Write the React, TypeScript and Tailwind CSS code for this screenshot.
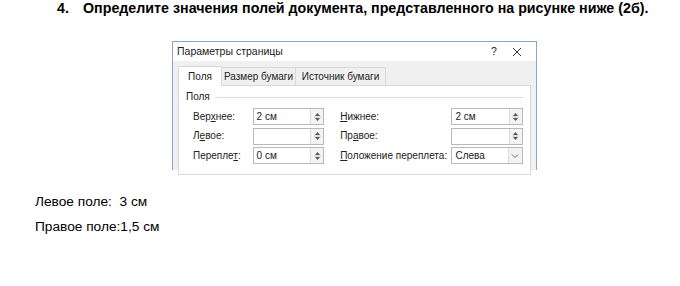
import React from 'react';

const Spinner: React.FC<{ value?: string }> = ({ value }) => (
  <div className="flex h-[17px] w-[72px] border border-[#b9b9b9] bg-white">
    <div className="flex-1 pl-[3px] text-[10px] leading-[15px] text-[#222]">{value}</div>
    <div className="flex w-[13px] flex-col items-center justify-center border-l border-[#dcdcdc] bg-[#f3f3f3]">
      <svg width="7" height="12" viewBox="0 0 7 12">
        <path d="M1 5 L3.5 2 L6 5 Z" fill="#555" />
        <path d="M1 7 L3.5 10 L6 7 Z" fill="#555" />
        <line x1="0" y1="6" x2="7" y2="6" stroke="#ccc" strokeWidth="1" />
      </svg>
    </div>
  </div>
);

const Select: React.FC<{ value: string }> = ({ value }) => (
  <div className="flex h-[17px] w-[72px] border border-[#b9b9b9] bg-white">
    <div className="flex-1 pl-[3px] text-[10px] leading-[15px] text-[#222]">{value}</div>
    <div className="flex w-[14px] items-center justify-center border-l border-[#dcdcdc] bg-[#f3f3f3]">
      <svg width="8" height="6" viewBox="0 0 8 6">
        <path d="M1 1.5 L4 4.5 L7 1.5" fill="none" stroke="#666" strokeWidth="1" />
      </svg>
    </div>
  </div>
);

export default function App() {
  const ui = { fontFamily: '"Liberation Sans", Arial, sans-serif' };
  return (
    <div className="h-[286px] w-[680px] overflow-hidden bg-white text-black" style={ui}>
      {/* Question heading */}
      <div className="flex pl-[57px] text-[14.25px] font-bold leading-[16px]">
        <span className="w-[26px]">4.</span>
        <span>Определите значения полей документа, представленного на рисунке ниже (2б).</span>
      </div>

      {/* Page setup dialog */}
      <div className="ml-[172px] mt-[25px] h-[129px] w-[365px] border-x border-t border-[#86a6cb] bg-[#f0f0f0]">
        <div className="flex h-[19px] items-center bg-white pl-[4px] text-[10.5px] text-[#222]">
          <span className="flex-1">Параметры страницы</span>
          <span className="w-[36px] text-center">?</span>
          <svg width="10" height="10" viewBox="0 0 10 10" className="mr-[14px]">
            <path d="M1 1 L9 9 M9 1 L1 9" stroke="#333" strokeWidth="1" />
          </svg>
        </div>

        <div className="px-[5px] pt-[5px]">
          <div className="flex items-end text-[10px] text-[#222]">
            <div className="relative z-10 -mb-px flex h-[20px] w-[44px] items-center justify-center border-x border-t border-[#d9d9d9] bg-white">
              Поля
            </div>
            <div className="flex h-[18px] w-[74px] items-center justify-center border-r border-t border-[#d9d9d9] bg-[#f0f0f0]">
              Размер бумаги
            </div>
            <div className="flex h-[18px] w-[90px] items-center justify-center border-r border-t border-[#d9d9d9] bg-[#f0f0f0]">
              Источник бумаги
            </div>
          </div>

          <div className="h-[90px] w-[353px] border border-[#d9d9d9] bg-white px-[7px] pt-[5px] text-[10px] leading-[12px] text-[#222]">
            <div className="flex items-center gap-[5px]">
              <span>Поля</span>
              <div className="h-px flex-1 bg-[#dcdcdc]" />
            </div>
            <div className="ml-[7px] mt-[5px] flex flex-col gap-[2.5px]">
              <div className="flex items-center">
                <span className="w-[60px]">Вер<u>х</u>нее:</span>
                <Spinner value="2 см" />
                <span className="ml-[16px] w-[112px]"><u>Н</u>ижнее:</span>
                <Spinner value="2 см" />
              </div>
              <div className="flex items-center">
                <span className="w-[60px]">Л<u>е</u>вое:</span>
                <Spinner />
                <span className="ml-[16px] w-[112px]">Пр<u>а</u>вое:</span>
                <Spinner />
              </div>
              <div className="flex items-center">
                <span className="w-[60px]">Перепле<u>т</u>:</span>
                <Spinner value="0 см" />
                <span className="ml-[16px] w-[112px]"><u>П</u>оложение переплета:</span>
                <Select value="Слева" />
              </div>
            </div>
          </div>
        </div>
      </div>

      {/* Answer */}
      <div className="ml-[35px] mt-[24px] flex flex-col gap-[9px] text-[13.7px] leading-[16px]">
        <span>Левое поле:&nbsp; 3 см</span>
        <span>Правое поле:1,5 см</span>
      </div>
    </div>
  );
}
